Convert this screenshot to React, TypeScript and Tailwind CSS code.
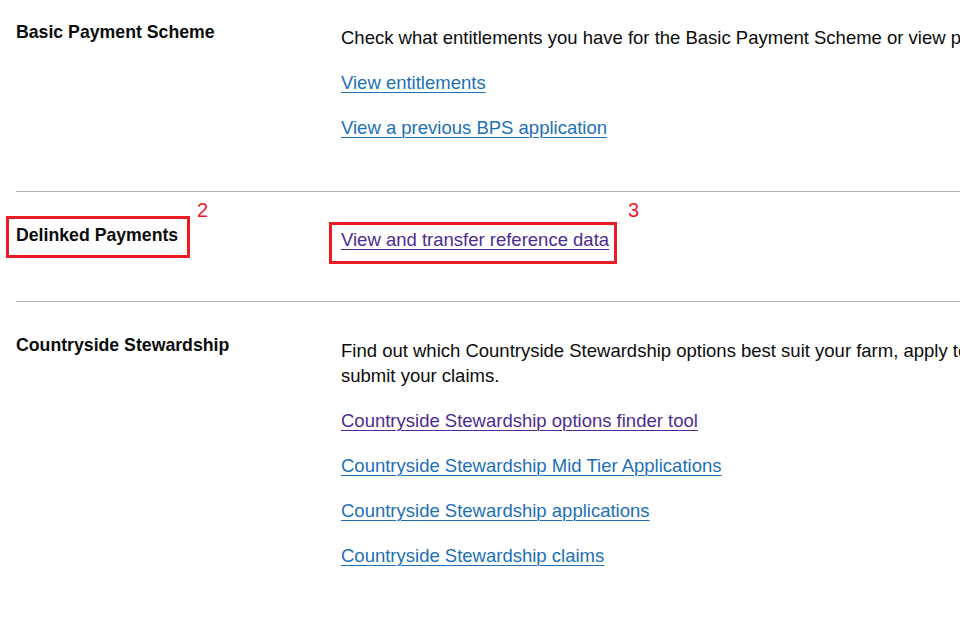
import React from "react";

const font = { fontFamily: '"Liberation Sans", Arial, sans-serif' };

type Item = { text: string; href?: boolean; visited?: boolean };

type Section = {
  title: string;
  items: Item[];
};

const sections: Section[] = [
  {
    title: "Basic Payment Scheme",
    items: [
      {
        text: "Check what entitlements you have for the Basic Payment Scheme or view payments you have received.",
      },
      { text: "View entitlements", href: true },
      { text: "View a previous BPS application", href: true },
    ],
  },
  {
    title: "Delinked Payments",
    items: [{ text: "View and transfer reference data", href: true, visited: true }],
  },
  {
    title: "Countryside Stewardship",
    items: [
      {
        text: "Find out which Countryside Stewardship options best suit your farm, apply to join the scheme and\nsubmit your claims.",
      },
      { text: "Countryside Stewardship options finder tool", href: true, visited: true },
      { text: "Countryside Stewardship Mid Tier Applications", href: true },
      { text: "Countryside Stewardship applications", href: true },
      { text: "Countryside Stewardship claims", href: true },
    ],
  },
];

function Row({ section, first, last }: { section: Section; first: boolean; last: boolean }) {
  return (
    <div
      className={`flex ${first ? "pt-[20px] pb-[51px]" : "pt-[31px] pb-[49px]"} ${
        last ? "" : "border-b border-[#b1b4b6]"
      }`}
    >
      <h2 className="w-[325px] shrink-0 text-[17.7px] leading-[25px] font-bold text-[#0b0c0c]">
        {section.title}
      </h2>
      <div className={`${section.items.length === 1 ? "mt-[4px]" : "mt-[5px]"} flex flex-col gap-[20px] whitespace-pre`}>
        {section.items.map((item) =>
          item.href ? (
            <a
              key={item.text}
              href="#"
              className={`self-start text-[18.5px] leading-[25px] underline decoration-1 underline-offset-[3px] ${
                item.visited ? "text-[#4c2c92]" : "text-[#1d70b8]"
              }`}
            >
              {item.text}
            </a>
          ) : (
            <p key={item.text} className="text-[18.5px] leading-[25px] text-[#0b0c0c]">
              {item.text}
            </p>
          )
        )}
      </div>
    </div>
  );
}

export default function App() {
  return (
    <div className="relative w-[960px] h-[640px] overflow-hidden bg-white" style={font}>
      <div className="pl-[16px] w-[1400px]">
        {sections.map((s, i) => (
          <Row key={s.title} section={s} first={i === 0} last={i === sections.length - 1} />
        ))}
      </div>

      {/* annotation overlays */}
      <div className="absolute left-[6px] top-[216px] w-[184px] h-[42px] border-[3px] border-[#ed1c24]" />
      <span className="absolute left-[197px] top-[199px] text-[20px] leading-[22px] text-[#ed1c24]">2</span>
      <div className="absolute left-[329px] top-[222px] w-[288px] h-[42px] border-[3px] border-[#ed1c24]" />
      <span className="absolute left-[628px] top-[199px] text-[20px] leading-[22px] text-[#ed1c24]">3</span>
    </div>
  );
}
